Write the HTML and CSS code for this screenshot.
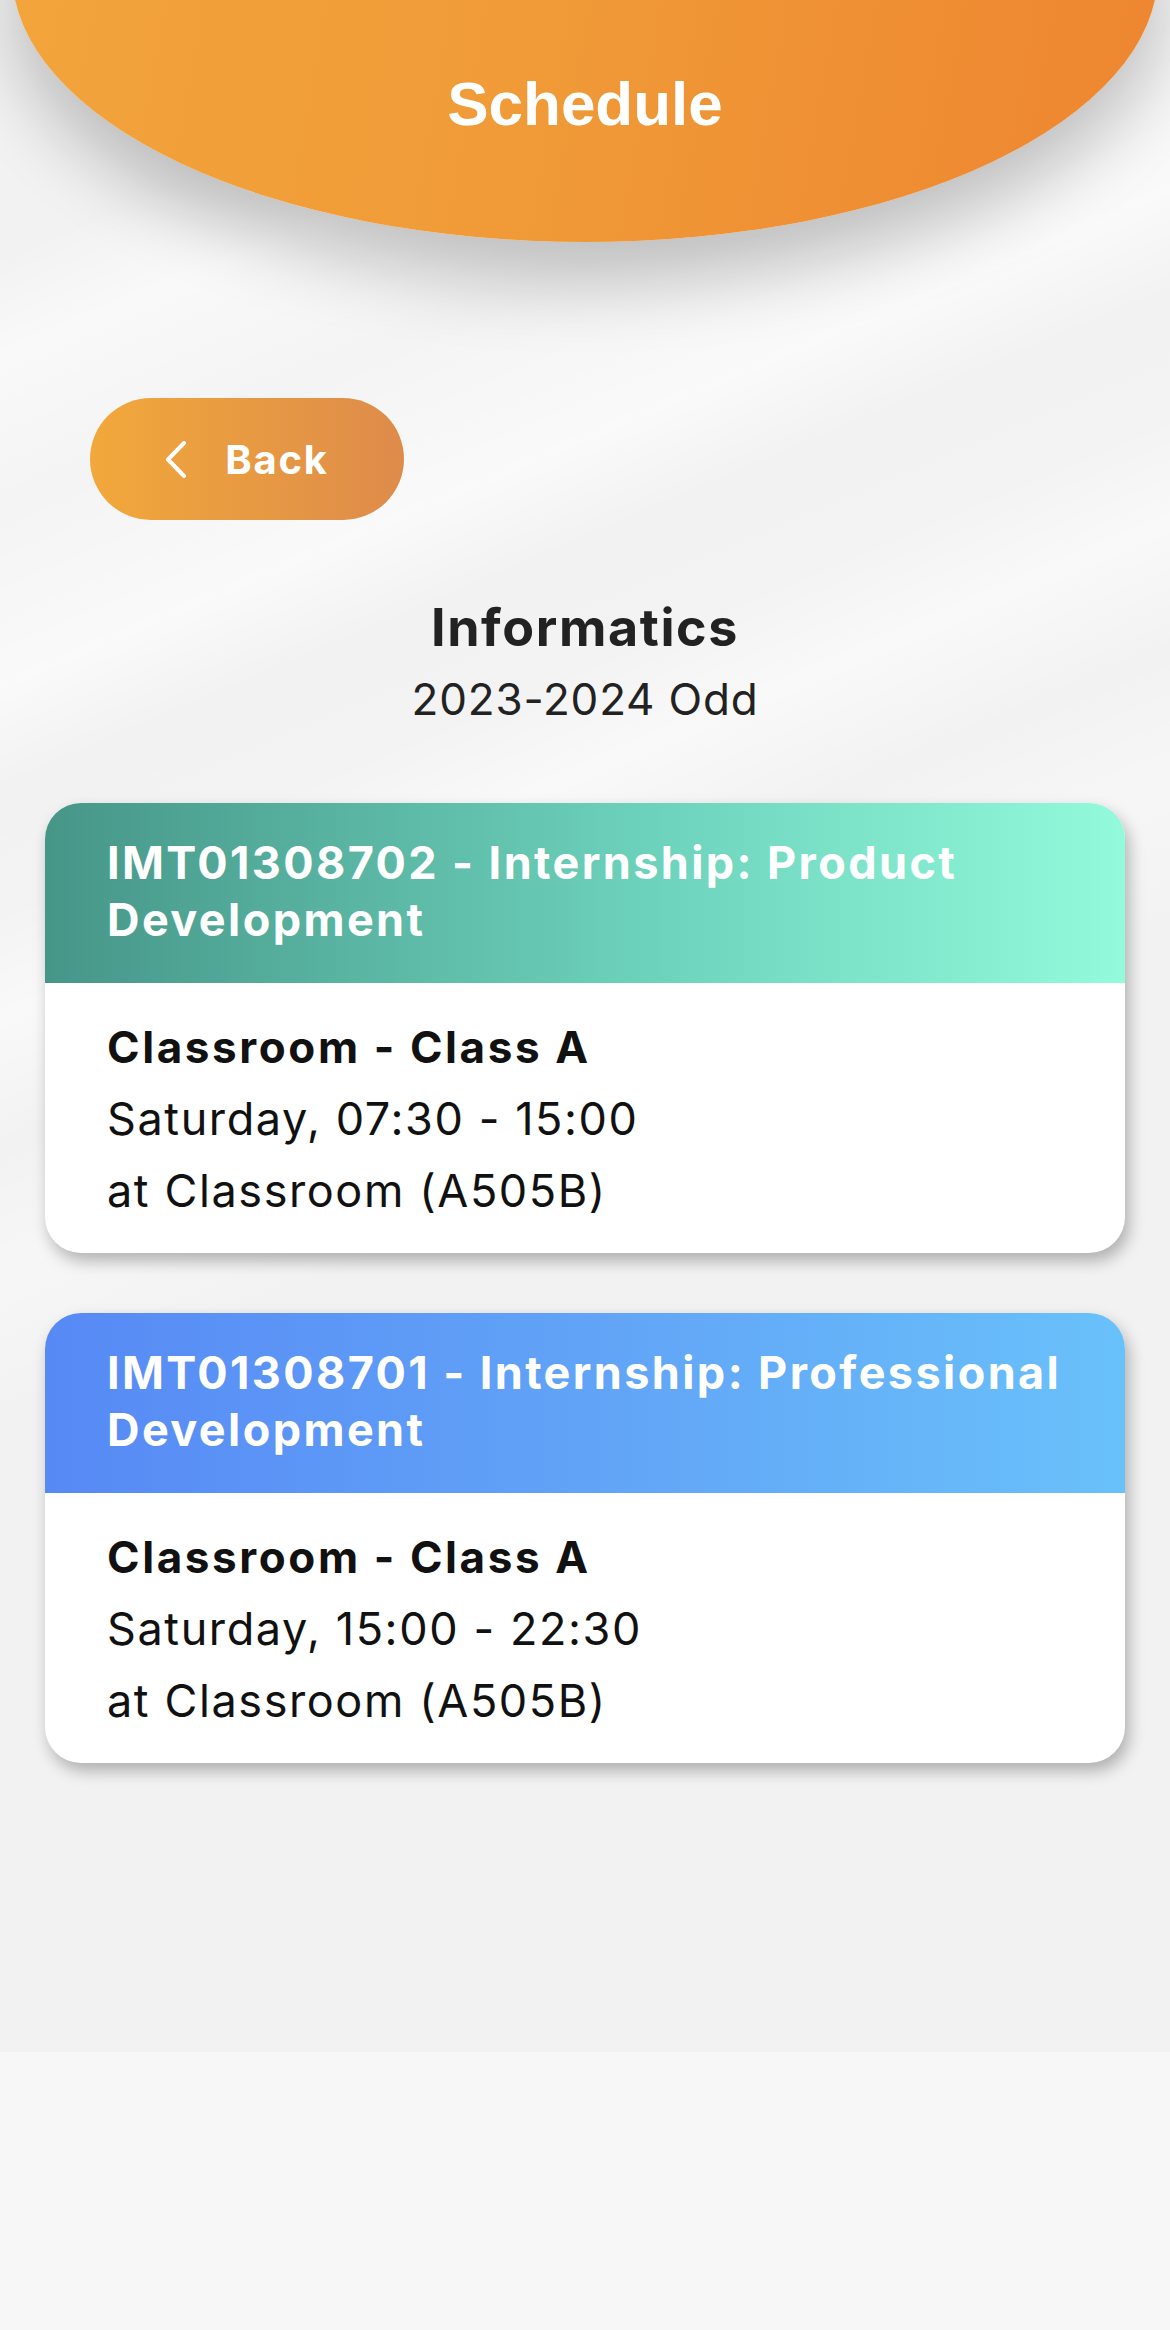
FILE: index.html
```html
<!DOCTYPE html>
<html lang="en">
<head>
<meta charset="utf-8">
<title>Schedule</title>
<link rel="stylesheet" href="styles.css">
</head>
<body>
<div class="app">
  <div class="streaks" aria-hidden="true"></div>
  <header class="hero">
    <div class="hero-shape" aria-hidden="true"></div>
    <h1 class="hero-title">Schedule</h1>
  </header>

  <div class="toolbar">
    <button class="back-btn" type="button">
      <svg class="back-icon" width="22" height="37" viewBox="0 0 22 37" aria-hidden="true">
        <path d="M19 2 L3 18.5 L19 35" fill="none" stroke="#fff" stroke-width="4" stroke-linecap="round" stroke-linejoin="round"/>
      </svg>
      <span>Back</span>
    </button>
  </div>

  <section class="program">
    <h2 class="program-name">Informatics</h2>
    <p class="program-term">2023-2024 Odd</p>
  </section>

  <section class="cards">
    <article class="card">
      <div class="card-head teal">IMT01308702 - Internship: Product Development</div>
      <div class="card-body">
        <div class="card-class">Classroom - Class A</div>
        <div class="card-line">Saturday, 07:30 - 15:00</div>
        <div class="card-line">at Classroom (A505B)</div>
      </div>
    </article>
    <article class="card">
      <div class="card-head blue">IMT01308701 - Internship: Professional Development</div>
      <div class="card-body">
        <div class="card-class">Classroom - Class A</div>
        <div class="card-line">Saturday, 15:00 - 22:30</div>
        <div class="card-line">at Classroom (A505B)</div>
      </div>
    </article>
  </section>
</div>
</body>
</html>
```

FILE: styles.css
```css
* { box-sizing: border-box; }

html, body {
  margin: 0;
  padding: 0;
  background: #f7f7f7;
}

body {
  font-family: Inter, "Noto Sans", "Liberation Sans", sans-serif;
  color: #111;
}

.app {
  position: relative;
  height: 2052px;
  overflow: hidden;
  background: #f2f2f2;
}

.streaks {
  position: absolute;
  inset: 0;
  pointer-events: none;
  background:
    linear-gradient(157deg,
      rgba(255,255,255,0) 0%,
      rgba(255,255,255,0) 10%,
      rgba(255,255,255,0.55) 14%,
      rgba(255,255,255,0.15) 20%,
      rgba(255,255,255,0.6) 27%,
      rgba(255,255,255,0) 31%,
      rgba(255,255,255,0.1) 36%,
      rgba(255,255,255,0.55) 40%,
      rgba(255,255,255,0) 45%,
      rgba(255,255,255,0.35) 50%,
      rgba(255,255,255,0) 56%,
      rgba(255,255,255,0) 100%);
}

.hero {
  position: relative;
  height: 242px;
  padding-top: 69px;
  text-align: center;
}

.hero-shape {
  position: absolute;
  left: 12px;
  top: -298px;
  width: 1146px;
  height: 540px;
  border-radius: 50%;
  background: linear-gradient(100deg, #f3a53b 0%, #f09b38 45%, #ee8530 100%);
  box-shadow: 0 40px 70px rgba(0,0,0,0.22);
}

.hero-title {
  position: relative;
  margin: 0;
  font-family: "Liberation Sans", Arial, sans-serif;
  font-weight: 700;
  font-size: 62px;
  line-height: 70px;
  color: #fff;
}

.toolbar {
  position: relative;
  margin-top: 156px;
  padding-left: 90px;
}

.back-btn {
  display: flex;
  align-items: center;
  justify-content: center;
  gap: 38px;
  width: 314px;
  height: 122px;
  border: 0;
  border-radius: 61px;
  background: linear-gradient(90deg, #f2a83b 0%, #e89a42 50%, #de8b4b 100%);
  color: #fff;
  font-family: Inter, "Noto Sans", sans-serif;
  font-weight: 700;
  font-size: 40px;
  letter-spacing: 1.8px;
  padding: 0;
  cursor: pointer;
}

.back-icon { display: block; }

.program {
  position: relative;
  margin-top: 77px;
  text-align: center;
  color: #222;
}

.program-name {
  margin: 0;
  font-size: 52px;
  line-height: 62px;
  font-weight: 700;
  letter-spacing: 1.6px;
}

.program-term {
  margin: 0;
  padding-top: 6px;
  font-size: 44px;
  line-height: 69px;
  font-weight: 400;
  letter-spacing: 0.8px;
}

.cards {
  position: relative;
  margin: 69px 45px 0;
  display: flex;
  flex-direction: column;
  gap: 60px;
}

.card {
  border-radius: 36px;
  overflow: hidden;
  background: #fff;
  box-shadow: 4px 8px 16px rgba(0,0,0,0.28);
}

.card-head {
  height: 180px;
  padding: 31px 50px 0 62px;
  color: #fff;
  font-weight: 700;
  font-size: 45px;
  line-height: 57px;
  letter-spacing: 2.4px;
}

.card-head.teal { background: linear-gradient(90deg, #469688 0%, #6cd1bb 55%, #93fadb 100%); }
.card-head.blue { background: linear-gradient(90deg, #5789f5 0%, #62a6f7 55%, #69c1fa 100%); }

.card-body {
  height: 270px;
  padding: 28px 62px 0;
  font-size: 45px;
  line-height: 72px;
  letter-spacing: 1.6px;
  color: #111;
}

.card-class {
  font-weight: 700;
  font-size: 44px;
  letter-spacing: 2.6px;
}
```
